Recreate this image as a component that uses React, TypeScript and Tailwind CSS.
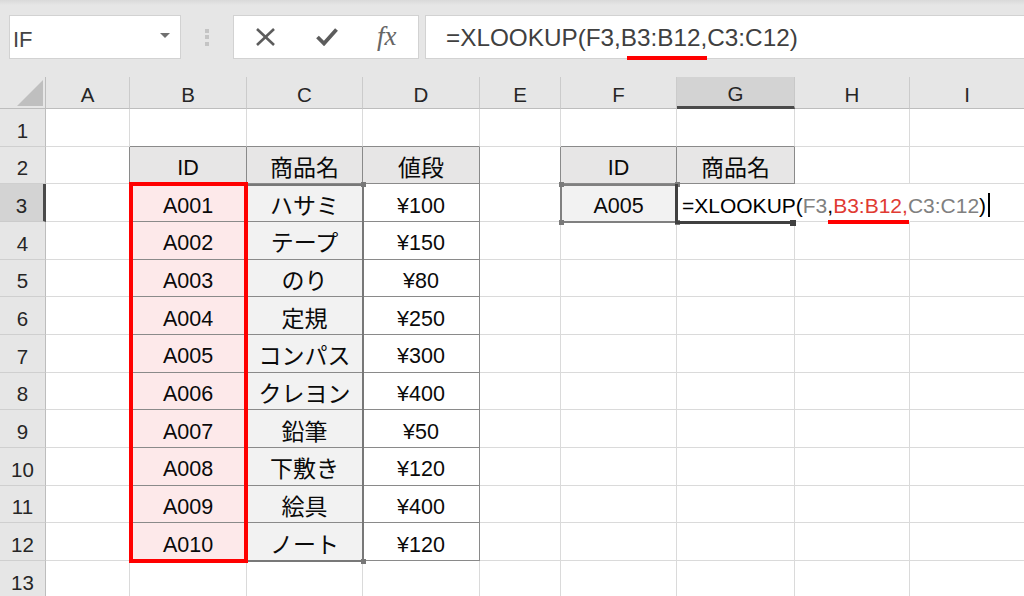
import React from 'react';

const COLS = ['A', 'B', 'C', 'D', 'E', 'F', 'G', 'H', 'I'];
const ids = ['A001', 'A002', 'A003', 'A004', 'A005', 'A006', 'A007', 'A008', 'A009', 'A010'];
const names = ['ハサミ', 'テープ', 'のり', '定規', 'コンパス', 'クレヨン', '鉛筆', '下敷き', '絵具', 'ノート'];
const prices = ['¥100', '¥150', '¥80', '¥250', '¥300', '¥400', '¥50', '¥120', '¥400', '¥120'];

function inTable(c: number, r: number) {
  return (c >= 1 && c <= 3 && r >= 2 && r <= 12) || (c >= 5 && c <= 6 && r >= 2 && r <= 3);
}

type CellInfo = { text: React.ReactNode; bg: string; jp: boolean };

function getCell(c: number, r: number): CellInfo | null {
  if (r === 2) {
    if (c === 1) return { text: 'ID', bg: 'bg-[#e7e6e6]', jp: false };
    if (c === 2) return { text: '商品名', bg: 'bg-[#e7e6e6]', jp: true };
    if (c === 3) return { text: '値段', bg: 'bg-[#e7e6e6]', jp: true };
    if (c === 5) return { text: 'ID', bg: 'bg-[#e7e6e6]', jp: false };
    if (c === 6) return { text: '商品名', bg: 'bg-[#e7e6e6]', jp: true };
  }
  if (r >= 3 && r <= 12) {
    const i = r - 3;
    if (c === 1) return { text: ids[i], bg: 'bg-[#fde9ea]', jp: false };
    if (c === 2) return { text: names[i], bg: 'bg-[#f2f2f2]', jp: true };
    if (c === 3) return { text: prices[i], bg: '', jp: false };
  }
  if (r === 3 && c === 5) return { text: 'A005', bg: 'bg-[#f2f2f2]', jp: false };
  return null;
}

function Formula() {
  return (
    <span className="text-[21px] leading-[24px] text-black">
      =XLOOKUP(<span className="text-[#808080]">F3</span>,
      <span className="relative inline-block text-[#e03a32]">
        B3:B12,
        <span className="absolute left-[-5px] right-[-1px] top-[26px] h-[4px] bg-[#ff0000]" />
      </span>
      <span className="text-[#808080]">C3:C12</span>)
      <span className="inline-block w-[1.5px] h-[24px] bg-black align-middle ml-[2px] -mt-[4px]" />
    </span>
  );
}

function DataCell({ c, r }: { c: number; r: number }) {
  const info = getCell(c, r);
  const overflowCell = r === 3 && (c === 6 || c === 7);
  const right = overflowCell
    ? 'border-r-transparent'
    : inTable(c, r) || inTable(c + 1, r)
    ? 'border-r-[#8a8a8a]'
    : 'border-r-[#dadada]';
  const bottom = inTable(c, r) || inTable(c, r + 1) ? 'border-b-[#8a8a8a]' : 'border-b-[#dadada]';
  if (c === 6 && r === 3) {
    return (
      <div className={`border-r border-b ${right} ${bottom} flex items-center justify-start pl-[5px] pt-[6px] whitespace-nowrap overflow-visible relative z-10`}>
        <Formula />
      </div>
    );
  }
  return (
    <div className={`border-r border-b ${right} ${bottom} ${info ? info.bg : ''} flex items-center justify-center pt-[6px] whitespace-nowrap text-[#0a0a0a]`}>
      {info && (
        <span className={info.jp ? 'text-[23px] leading-[24px]' : 'text-[21.5px] leading-[24px]'}>{info.text}</span>
      )}
    </div>
  );
}

export default function App() {
  const rows = Array.from({ length: 13 }, (_, i) => i + 1);
  return (
    <div className="w-[1024px] h-[596px] overflow-hidden bg-white font-['Liberation_Sans','Noto_Sans_CJK_JP',sans-serif]">
      {/* Formula bar */}
      <div className="h-[77px] bg-[linear-gradient(#d9d9d9,#e6e6e6_5px)] flex items-start pt-[15px] pl-[9px]">
        <div className="w-[172px] h-[44px] shrink-0 bg-white border border-[#d2d2d2] flex items-center pl-[3px] pr-[10px]">
          <span className="flex-1 text-[22px] leading-[24px] text-[#444] pt-[5px]">IF</span>
          <svg width="10" height="5" viewBox="0 0 10 5" className="mb-[3px]">
            <polygon points="0,0 10,0 5,5" fill="#707070" />
          </svg>
        </div>
        <div className="w-[52px] h-[44px] shrink-0 flex flex-col items-center justify-center gap-[2.5px]">
          <div className="w-[4px] h-[4px] bg-[#c4c4c4]" />
          <div className="w-[4px] h-[4px] bg-[#c4c4c4]" />
          <div className="w-[4px] h-[4px] bg-[#c4c4c4]" />
        </div>
        <div className="w-[186px] h-[44px] shrink-0 bg-white border border-[#d2d2d2] flex items-center">
          <svg width="21" height="18" viewBox="0 0 21 18" className="ml-[21px]">
            <line x1="2" y1="1" x2="19" y2="17" stroke="#5c5c5c" strokeWidth="2.6" />
            <line x1="19" y1="1" x2="2" y2="17" stroke="#5c5c5c" strokeWidth="2.6" />
          </svg>
          <svg width="22" height="18" viewBox="0 0 22 18" className="ml-[40px]">
            <polyline points="1.5,9 8,15.5 20.5,1.5" fill="none" stroke="#5c5c5c" strokeWidth="3.8" />
          </svg>
          <span className="ml-[39px] font-['Liberation_Serif',serif] italic text-[27px] leading-[28px] text-[#666] -mt-[2px]">fx</span>
        </div>
        <div className="flex-1 h-[44px] ml-[6px] bg-white border border-[#d2d2d2] border-r-0 flex items-center pl-[20px] pt-[2px] whitespace-nowrap">
          <span className="text-[24.3px] leading-[24px] text-[#404040]">
            =XLOOKUP(F3,
            <span className="relative inline-block">
              B3:B12
              <span className="absolute left-[6px] w-[80px] top-[30px] h-[4px] bg-[#ff0000]" />
            </span>
            ,C3:C12)
          </span>
        </div>
      </div>

      {/* Sheet */}
      <div className="relative">
        <div className="grid grid-cols-[46px_84px_117px_116px_117px_81px_116px_118px_115px_115px] grid-rows-[32px_repeat(13,37.67px)] w-[1025px]">
          <div className="bg-[#e6e6e6] border-r border-b border-r-[#bdbdbd] border-b-[#bdbdbd]">
            <svg width="45" height="31" viewBox="0 0 45 31" className="block">
              <polygon points="43,3 43,29 17,29" fill="#bfbfbf" />
            </svg>
          </div>
          {COLS.map((l) =>
            l === 'G' ? (
              <div key={l} className="bg-[#d3d3d3] border-r border-r-[#c8c8c8] border-b-[3px] border-b-[#4a4a4a] flex items-center justify-center pt-[5px] text-[20.5px] leading-[22px] text-[#262626]">
                {l}
              </div>
            ) : (
              <div key={l} className="bg-[#e6e6e6] border-r border-r-[#cbcbcb] border-b border-b-[#bdbdbd] flex items-center justify-center pt-[4px] text-[20.5px] leading-[22px] text-[#262626]">
                {l}
              </div>
            )
          )}
          {rows.map((r) => (
            <React.Fragment key={r}>
              {r === 3 ? (
                <div className="bg-[#d3d3d3] border-r-[3px] border-r-[#4a4a4a] border-b border-b-[#cbcbcb] flex items-center justify-center pt-[7px] text-[20.5px] leading-[22px] text-[#262626]">
                  {r}
                </div>
              ) : (
                <div className="bg-[#e6e6e6] border-r border-r-[#bdbdbd] border-b border-b-[#cfcfcf] flex items-center justify-center pt-[7px] text-[20.5px] leading-[22px] text-[#262626]">
                  {r}
                </div>
              )}
              {COLS.map((_, c) => (
                <DataCell key={c} c={c} r={r} />
              ))}
            </React.Fragment>
          ))}
        </div>

        {/* C3:C12 reference outline */}
        <div className="absolute left-[246px] top-[106.5px] w-[118px] h-[378px] border-2 border-[#787878] z-20" />
        <div className="absolute left-[360.5px] top-[104.5px] w-[5px] h-[5px] bg-[#787878] z-20" />
        <div className="absolute left-[360.5px] top-[481.5px] w-[5px] h-[5px] bg-[#787878] z-20" />
        {/* F3 reference outline */}
        <div className="absolute left-[560px] top-[106.5px] w-[118px] h-[39px] border-2 border-[#808080] z-20" />
        <div className="absolute left-[558.5px] top-[104.5px] w-[5px] h-[5px] bg-[#7a7a7a] z-20" />
        <div className="absolute left-[674.5px] top-[104.5px] w-[5px] h-[5px] bg-[#7a7a7a] z-20" />
        <div className="absolute left-[558.5px] top-[142.5px] w-[5px] h-[5px] bg-[#7a7a7a] z-20" />
        <div className="absolute left-[674.5px] top-[142.5px] w-[5px] h-[5px] bg-[#7a7a7a] z-20" />
        {/* Red highlight B3:B12 */}
        <div className="absolute left-[129px] top-[105px] w-[119px] h-[381px] border-4 border-[#ff0000] z-20" />
        {/* G3 active cell */}
        <div className="absolute left-[675px] top-[106.5px] w-[3px] h-[39px] bg-[#404040] z-20" />
        <div className="absolute left-[675px] top-[143.5px] w-[116px] h-[3px] bg-[#404040] z-20" />
        <div className="absolute left-[790px] top-[142.5px] w-[6px] h-[6px] bg-[#404040] z-20" />
      </div>
    </div>
  );
}
